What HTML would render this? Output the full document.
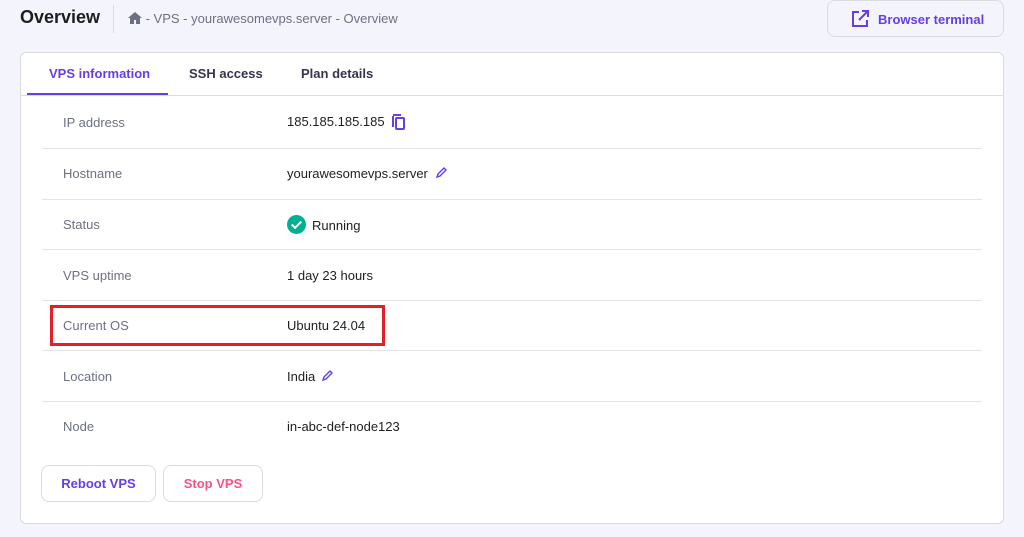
<!DOCTYPE html>
<html><head><style>
*{margin:0;padding:0;box-sizing:border-box}
body{width:1024px;height:537px;background:#f4f4fd;font-family:"Liberation Sans",sans-serif;position:relative;overflow:hidden;color:#2f1c6a}
.a{position:absolute}
.title{left:20px;top:7px;font-size:18px;font-weight:bold;color:#1d1e20}
.sep{left:113px;top:5px;width:1px;height:28px;background:#dadce0}
.bc{left:128px;top:11px;font-size:13px;color:#6d7081}
.bt{left:827px;top:0;width:177px;height:37px;border:1px solid #dadce0;border-radius:8px;background:#f4f4fd;font-size:13px;font-weight:bold;color:#673de6;padding:11px 0 0 50px}
.card{left:20px;top:52px;width:984px;height:472px;background:#fff;border:1px solid #dadce0;border-radius:6px}
.tab{top:66px;font-size:13px;font-weight:bold;color:#36344d}
.tl{left:20px;top:95px;width:984px;height:1px;background:#dadce0}
.ul{left:27px;top:93px;width:141px;height:2px;background:#673de6}
.row{left:42px;width:940px;height:1px;background:#e3e3e8}
.lb{left:63px;font-size:13px;color:#6d7081}
.v{left:287px;font-size:13px;color:#1d1e20}
.btn{top:465px;height:37px;border:1px solid #dadce0;border-radius:8px;background:#fff;font-size:13px;font-weight:bold;text-align:center;line-height:35px}
</style></head><body>
<div class="a title">Overview</div>
<div class="a sep"></div>
<div class="a bc"><svg width="14" height="12" viewBox="0 0 14 12" style="vertical-align:-1px"><path d="M7 0L0 6h2v6h4V8h2v4h4V6h2z" fill="#6d7081"/></svg> - VPS - yourawesomevps.server - Overview</div>
<div class="a bt"><svg class="a" style="left:23px;top:9px" width="18" height="18" viewBox="0 0 18 18"><path d="M8 2H2v14h14v-6" fill="none" stroke="#673de6" stroke-width="2"/><path d="M11 1h6v6M17 1L8 10" fill="none" stroke="#673de6" stroke-width="2"/></svg>Browser terminal</div>
<div class="a card"></div>
<div class="a tab" style="left:49px;color:#673de6">VPS information</div>
<div class="a tab" style="left:189px">SSH access</div>
<div class="a tab" style="left:301px">Plan details</div>
<div class="a tl"></div><div class="a ul"></div>
<div class="a lb" style="top:115px">IP address</div>
<div class="a v" style="top:114px">185.185.185.185 <svg width="14" height="16" viewBox="0 0 14 16" style="vertical-align:-4px;margin-left:4px"><path d="M1 2v11M1 1h8" stroke="#673de6" stroke-width="2" fill="none"/><rect x="4" y="4" width="8" height="11" rx="1" stroke="#673de6" stroke-width="2" fill="none"/></svg></div>
<div class="a row" style="top:148px"></div>
<div class="a lb" style="top:166px">Hostname</div>
<div class="a v" style="top:166px">yourawesomevps.server <svg width="12" height="12" viewBox="0 0 12 12" style="margin-left:4px"><path d="M1 11l1-3 6-6 2 2-6 6z" fill="none" stroke="#673de6" stroke-width="1.4"/></svg></div>
<div class="a row" style="top:199px"></div>
<div class="a lb" style="top:217px">Status</div>
<div class="a v" style="top:215px"><svg width="19" height="19" viewBox="0 0 20 20" style="vertical-align:-4px;margin-right:6px"><circle cx="10" cy="10" r="10" fill="#00b090"/><path d="M5 10l3.5 3.5L15 7" stroke="#fff" stroke-width="2.2" fill="none"/></svg>Running</div>
<div class="a row" style="top:249px"></div>
<div class="a lb" style="top:268px">VPS uptime</div>
<div class="a v" style="top:268px">1 day 23 hours</div>
<div class="a row" style="top:300px"></div>
<div class="a lb" style="top:318px">Current OS</div>
<div class="a v" style="top:318px">Ubuntu 24.04</div>
<div class="a" style="left:50px;top:305px;width:335px;height:41px;border:3px solid #e3202a"></div>
<div class="a row" style="top:350px"></div>
<div class="a lb" style="top:369px">Location</div>
<div class="a v" style="top:369px">India <svg width="12" height="12" viewBox="0 0 12 12" style="margin-left:3px"><path d="M1 11l1-3 6-6 2 2-6 6z" fill="none" stroke="#673de6" stroke-width="1.4"/></svg></div>
<div class="a row" style="top:401px"></div>
<div class="a lb" style="top:419px">Node</div>
<div class="a v" style="top:419px">in-abc-def-node123</div>
<div class="a btn" style="left:41px;width:115px;color:#673de6">Reboot VPS</div>
<div class="a btn" style="left:163px;width:100px;color:#fc5185">Stop VPS</div>
</body></html>
